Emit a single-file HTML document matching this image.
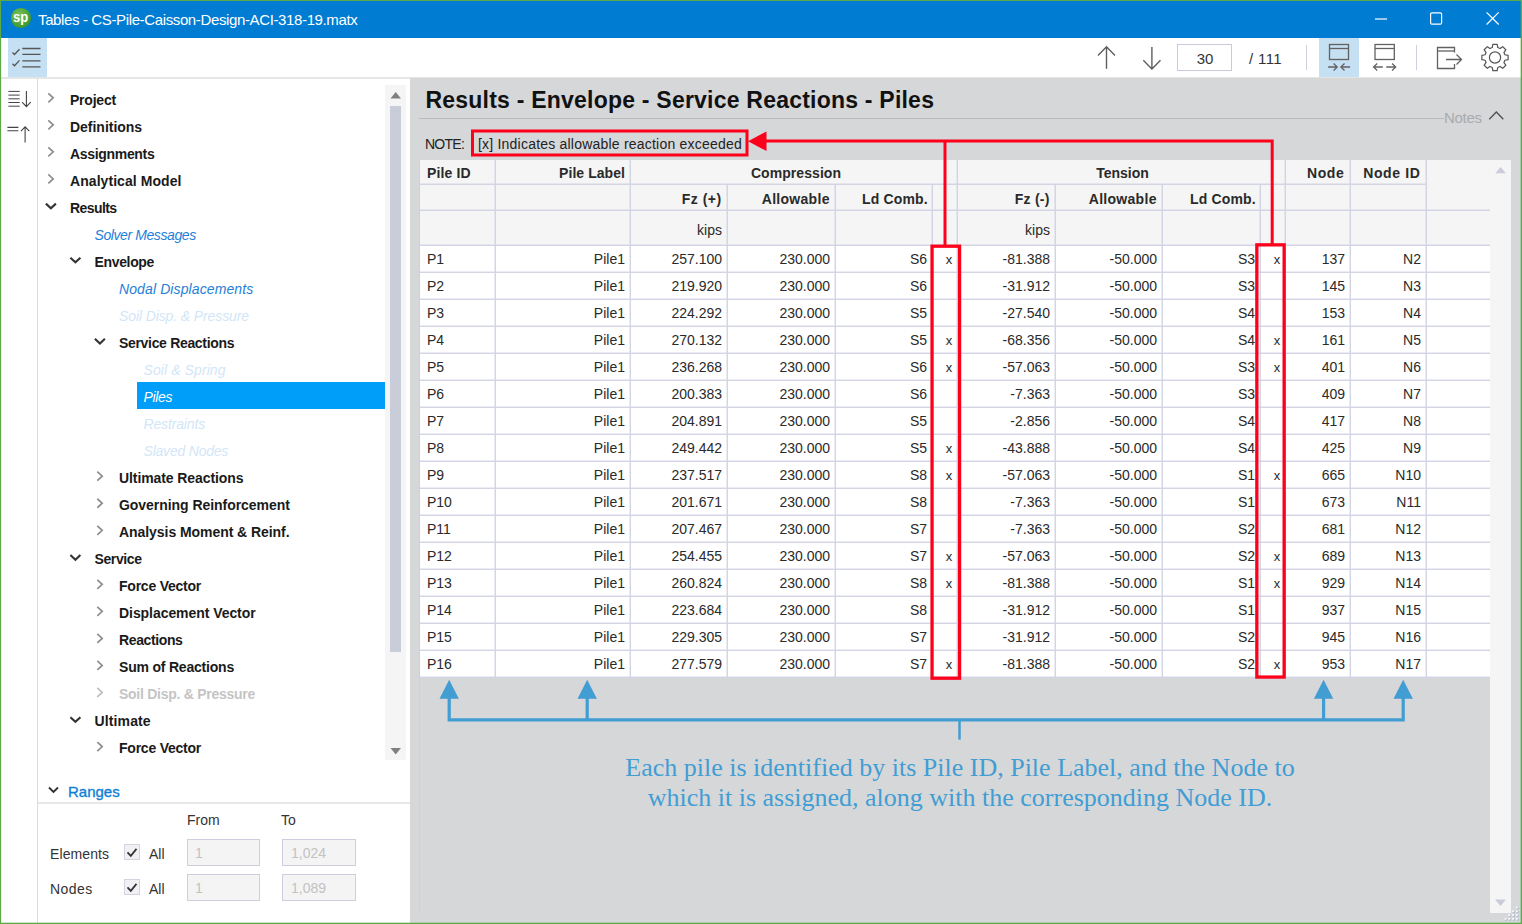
<!DOCTYPE html>
<html><head><meta charset="utf-8"><title>Tables</title>
<style>
*{box-sizing:border-box;margin:0;padding:0}
html,body{width:1522px;height:924px;overflow:hidden;background:#d6d7d9}
body{font-family:"Liberation Sans",sans-serif;font-size:14px;color:#1e1e1e;position:relative}
.abs{position:absolute}
.t{position:absolute;white-space:nowrap;line-height:1}
.b{font-weight:bold}
.i{font-style:italic}
.r{text-align:right}
.c{text-align:center}
.cell{position:absolute;white-space:nowrap;line-height:27px;height:27px;font-size:14px;color:#2a2a2a}
.hl{position:absolute;height:2px;margin-top:-1px;background:linear-gradient(to bottom,rgba(205,208,226,.40) 50%,#d3d5e4 50%)}
.vl{position:absolute;width:2px;margin-left:-1px;background:linear-gradient(to right,rgba(205,208,226,.40) 50%,#d3d5e4 50%)}
svg{position:absolute;overflow:visible}
</style></head><body>

<div class="abs" style="left:0;top:0;width:1522px;height:924px;background:#5caa44"></div>
<div class="abs" style="left:1px;top:1px;width:1520px;height:37px;background:#007cd3"></div>
<div class="abs" style="left:1px;top:38px;width:1520px;height:40px;background:#fff"></div>
<div class="abs" style="left:1px;top:78px;width:409px;height:845px;background:#fff"></div>
<div class="abs" style="left:410px;top:78px;width:1111px;height:845px;background:#d6d7d9"></div>
<div class="abs" style="left:11px;top:8.400px;width:19.600px;height:19.600px;border-radius:50%;background:radial-gradient(circle at 40% 35%,#79c25a,#3f9a2c 70%,#2f8a22)"></div>
<div class="t b" style="left:13.200px;top:9.200px;font-size:15px;color:#fff;transform:scaleX(.87);transform-origin:0 0">sp</div>
<div class="t" style="left:38px;top:11.800px;font-size:15px;letter-spacing:-0.37px;color:#fff">Tables - CS-Pile-Caisson-Design-ACI-318-19.matx</div>
<svg style="left:0;top:0" width="1522" height="40"><g stroke="#fff" stroke-width="1.2" fill="none"><path d="M1375 19H1387"/><rect x="1430.600" y="12.800" width="11" height="11.400" rx="1.200"/><path d="M1486.600 12.300L1498.700 24.500M1498.700 12.300L1486.600 24.500"/></g></svg>
<div class="abs" style="left:8px;top:38px;width:39px;height:39px;background:#c5dff3"></div>
<svg style="left:0;top:0" width="60" height="80"><g stroke="#555" stroke-width="1.3" fill="none"><path d="M12.500 52.500L14.5 54.5L19.500 49.200"/><path d="M12.500 63.700L14.5 65.700L19.500 60.400"/><path d="M22.300 48.500H40.500M22.300 54.300H40.500M22.300 60.900H40.500M22.300 66.800H40.500"/></g></svg>
<div class="abs" style="left:1px;top:77px;width:1520px;height:1px;background:#e3e5e5"></div><div class="abs" style="left:1px;top:78px;width:409px;height:1px;background:#e6e7e8"></div>
<div class="abs" style="left:37px;top:78px;width:1px;height:845px;background:#dcdcdc"></div>
<svg style="left:0;top:0" width="40" height="160"><g stroke="#444" stroke-width="1.1" fill="none"><path d="M8.400 91.400H19.700M8.400 95.100H19.700M8.400 98.800H19.700M8.400 102.500H19.700M8.400 106.200H19.700" stroke-width="1"/><path d="M26.400 91V106.300M22.100 102.200L26.400 106.600L30.700 102.200"/><path d="M7.400 127.400H18.400M7.400 130.700H18.400"/><path d="M25.100 142.500V127.200M21 131.200L25.100 126.900L29.300 131.200"/></g></svg>
<svg style="left:0;top:0" width="1522" height="80"><g stroke="#5e5e5e" stroke-width="1.400" fill="none"><path d="M1106.500 68.800V46.800M1098 55.400L1106.500 46.800L1115 55.400"/><path d="M1151.900 47V68.800M1143.300 60.300L1151.900 68.900L1160.500 60.300"/></g></svg>
<div class="abs" style="left:1177px;top:44px;width:55px;height:27px;border:1px solid #c9cade;background:#fff"></div>
<div class="t c" style="left:1177px;top:50.500px;width:56px;font-size:15px;color:#333">30</div>
<div class="t" style="left:1249px;top:50.500px;font-size:15px;letter-spacing:0.36px;color:#333">/ 111</div>
<div class="abs" style="left:1306px;top:45px;width:1px;height:25px;background:#cfd0dc"></div>
<div class="abs" style="left:1319px;top:38px;width:40px;height:39px;background:#c5dff3"></div>
<div class="abs" style="left:1416px;top:45px;width:1px;height:25px;background:#cfd0dc"></div>
<svg style="left:0;top:0" width="1522" height="80"><g stroke="#626262" stroke-width="1.3" fill="none"><rect x="1329.5" y="44.500" width="19" height="15"/><path d="M1329.500 48.500H1348.500"/><path d="M1328.100 67H1337.200M1333.600 63.500L1337.200 67L1333.600 70.500M1350.100 67H1340.900M1344.500 63.500L1340.900 67L1344.500 70.500"/><rect x="1375" y="44.500" width="19.300" height="15"/><path d="M1375 48.500H1394.300"/><path d="M1373.600 67H1382.800M1377.200 63.500L1373.600 67L1377.200 70.500M1395.700 67H1386.300M1392.100 63.500L1395.700 67L1392.100 70.500"/><path d="M1454.500 52.500V47.500H1437.500V68.500H1454.500V64"/><path d="M1437.500 51H1454.500"/><path d="M1446 59.500H1461.500M1456.500 54.500L1461.500 59.500L1456.500 64.500"/></g><g transform="translate(1495,57.500)" stroke="#555" stroke-width="1.2" fill="none" stroke-linejoin="round"><circle r="5.600"/><path d="M-2.75 -9.93 L-2.20 -13.12 L2.20 -13.12 L2.75 -9.93 L5.07 -8.96 L7.72 -10.83 L10.83 -7.72 L8.96 -5.07 L9.93 -2.75 L13.12 -2.20 L13.12 2.20 L9.93 2.75 L8.96 5.07 L10.83 7.72 L7.72 10.83 L5.07 8.96 L2.75 9.93 L2.20 13.12 L-2.20 13.12 L-2.75 9.93 L-5.07 8.96 L-7.72 10.83 L-10.83 7.72 L-8.96 5.07 L-9.93 2.75 L-13.12 2.20 L-13.12 -2.20 L-9.93 -2.75 L-8.96 -5.07 L-10.83 -7.72 L-7.72 -10.83 L-5.07 -8.96Z"/></g></svg>
<svg style="left:0;top:0" width="400" height="800"><path d="M48.3 93.3L53.2 97.8L48.3 102.3" stroke="#8e8e8e" stroke-width="1.700" fill="none"/></svg>
<div class="t b" style="left:70px;top:92.55px;font-size:14px;letter-spacing:-0.22px;color:#1a1a1a">Project</div>
<svg style="left:0;top:0" width="400" height="800"><path d="M48.3 120.33L53.2 124.83L48.3 129.33" stroke="#8e8e8e" stroke-width="1.700" fill="none"/></svg>
<div class="t b" style="left:70px;top:119.58px;font-size:14px;letter-spacing:-0.02px;color:#1a1a1a">Definitions</div>
<svg style="left:0;top:0" width="400" height="800"><path d="M48.3 147.36L53.2 151.86L48.3 156.36" stroke="#8e8e8e" stroke-width="1.700" fill="none"/></svg>
<div class="t b" style="left:70px;top:146.61px;font-size:14px;letter-spacing:-0.32px;color:#1a1a1a">Assignments</div>
<svg style="left:0;top:0" width="400" height="800"><path d="M48.3 174.39L53.2 178.89L48.3 183.39" stroke="#8e8e8e" stroke-width="1.700" fill="none"/></svg>
<div class="t b" style="left:70px;top:173.64px;font-size:14px;letter-spacing:0.06px;color:#1a1a1a">Analytical Model</div>
<svg style="left:0;top:0" width="400" height="800"><path d="M45.9 203.62L50.9 208.32L55.9 203.62" stroke="#333" stroke-width="2.1" fill="none"/></svg>
<div class="t b" style="left:70px;top:200.67px;font-size:14px;letter-spacing:-0.58px;color:#1a1a1a">Results</div>
<div class="t i" style="left:94.5px;top:227.7px;font-size:14px;letter-spacing:-0.41px;color:#1f80d8">Solver Messages</div>
<svg style="left:0;top:0" width="400" height="800"><path d="M70.4 257.68L75.4 262.38L80.4 257.68" stroke="#333" stroke-width="2.1" fill="none"/></svg>
<div class="t b" style="left:94.5px;top:254.73px;font-size:14px;letter-spacing:-0.34px;color:#1a1a1a">Envelope</div>
<div class="t i" style="left:119px;top:281.76px;font-size:14px;letter-spacing:0.11px;color:#1f80d8">Nodal Displacements</div>
<div class="t i" style="left:119px;top:308.79px;font-size:14px;letter-spacing:-0.11px;color:#d2e6f7">Soil Disp. &amp; Pressure</div>
<svg style="left:0;top:0" width="400" height="800"><path d="M94.9 338.77L99.9 343.47L104.9 338.77" stroke="#333" stroke-width="2.1" fill="none"/></svg>
<div class="t b" style="left:119px;top:335.82px;font-size:14px;letter-spacing:-0.32px;color:#1a1a1a">Service Reactions</div>
<div class="t i" style="left:143.5px;top:362.85px;font-size:14px;letter-spacing:0.09px;color:#d2e6f7">Soil &amp; Spring</div>
<div class="abs" style="left:137px;top:382px;width:248px;height:27px;background:#009df9"></div>
<div class="t i" style="left:143.5px;top:389.88px;font-size:14px;letter-spacing:-0.33px;color:#fff">Piles</div>
<div class="t i" style="left:143.5px;top:416.91px;font-size:14px;letter-spacing:-0.15px;color:#d2e6f7">Restraints</div>
<div class="t i" style="left:143.5px;top:443.94px;font-size:14px;letter-spacing:-0.21px;color:#d2e6f7">Slaved Nodes</div>
<svg style="left:0;top:0" width="400" height="800"><path d="M97.3 471.72L102.2 476.22L97.3 480.72" stroke="#8e8e8e" stroke-width="1.700" fill="none"/></svg>
<div class="t b" style="left:119px;top:470.97px;font-size:14px;letter-spacing:-0.09px;color:#1a1a1a">Ultimate Reactions</div>
<svg style="left:0;top:0" width="400" height="800"><path d="M97.3 498.75L102.2 503.25L97.3 507.75" stroke="#8e8e8e" stroke-width="1.700" fill="none"/></svg>
<div class="t b" style="left:119px;top:498px;font-size:14px;letter-spacing:-0.05px;color:#1a1a1a">Governing Reinforcement</div>
<svg style="left:0;top:0" width="400" height="800"><path d="M97.3 525.78L102.2 530.28L97.3 534.78" stroke="#8e8e8e" stroke-width="1.700" fill="none"/></svg>
<div class="t b" style="left:119px;top:525.03px;font-size:14px;letter-spacing:-0.06px;color:#1a1a1a">Analysis Moment &amp; Reinf.</div>
<svg style="left:0;top:0" width="400" height="800"><path d="M70.4 555.01L75.4 559.71L80.4 555.01" stroke="#333" stroke-width="2.1" fill="none"/></svg>
<div class="t b" style="left:94.5px;top:552.06px;font-size:14px;letter-spacing:-0.39px;color:#1a1a1a">Service</div>
<svg style="left:0;top:0" width="400" height="800"><path d="M97.3 579.84L102.2 584.34L97.3 588.84" stroke="#8e8e8e" stroke-width="1.700" fill="none"/></svg>
<div class="t b" style="left:119px;top:579.09px;font-size:14px;letter-spacing:-0.23px;color:#1a1a1a">Force Vector</div>
<svg style="left:0;top:0" width="400" height="800"><path d="M97.3 606.87L102.2 611.37L97.3 615.87" stroke="#8e8e8e" stroke-width="1.700" fill="none"/></svg>
<div class="t b" style="left:119px;top:606.12px;font-size:14px;letter-spacing:-0.06px;color:#1a1a1a">Displacement Vector</div>
<svg style="left:0;top:0" width="400" height="800"><path d="M97.3 633.9L102.2 638.4L97.3 642.9" stroke="#8e8e8e" stroke-width="1.700" fill="none"/></svg>
<div class="t b" style="left:119px;top:633.15px;font-size:14px;letter-spacing:-0.38px;color:#1a1a1a">Reactions</div>
<svg style="left:0;top:0" width="400" height="800"><path d="M97.3 660.93L102.2 665.43L97.3 669.93" stroke="#8e8e8e" stroke-width="1.700" fill="none"/></svg>
<div class="t b" style="left:119px;top:660.18px;font-size:14px;letter-spacing:-0.2px;color:#1a1a1a">Sum of Reactions</div>
<svg style="left:0;top:0" width="400" height="800"><path d="M97.3 687.96L102.2 692.46L97.3 696.96" stroke="#bdbdbd" stroke-width="1.700" fill="none"/></svg>
<div class="t b" style="left:119px;top:687.21px;font-size:14px;letter-spacing:-0.27px;color:#c4c4c4">Soil Disp. &amp; Pressure</div>
<svg style="left:0;top:0" width="400" height="800"><path d="M70.4 717.19L75.4 721.89L80.4 717.19" stroke="#333" stroke-width="2.1" fill="none"/></svg>
<div class="t b" style="left:94.5px;top:714.24px;font-size:14px;letter-spacing:0.13px;color:#1a1a1a">Ultimate</div>
<svg style="left:0;top:0" width="400" height="800"><path d="M97.3 742.02L102.2 746.52L97.3 751.02" stroke="#8e8e8e" stroke-width="1.700" fill="none"/></svg>
<div class="t b" style="left:119px;top:741.27px;font-size:14px;letter-spacing:-0.23px;color:#1a1a1a">Force Vector</div>
<div class="abs" style="left:385px;top:85px;width:21px;height:675px;background:#f5f5f5"></div>
<div class="abs" style="left:390px;top:106px;width:11px;height:546px;background:#c9cdd9"></div>
<svg style="left:0;top:0" width="420" height="800"><path d="M390.500 98.500L395.700 92L401 98.500Z" fill="#808080"/><path d="M390.500 748L401 748L395.700 754.500Z" fill="#808080"/></svg>
<svg style="left:0;top:0" width="100" height="820"><path d="M49 787.500L53.500 792L58 787.500" stroke="#333" stroke-width="1.9" fill="none"/></svg>
<div class="t" style="left:68px;top:783.500px;font-size:15px;color:#0f7fd6;-webkit-text-stroke:0.35px #0f7fd6">Ranges</div>
<div class="abs" style="left:38px;top:802px;width:372px;height:2px;background:#e7e7e7"></div>
<div class="t" style="left:187px;top:813px;font-size:14px;color:#333">From</div>
<div class="t" style="left:281px;top:813px;font-size:14px;color:#333">To</div>
<div class="t" style="left:50px;top:846.6px;font-size:14px;letter-spacing:0.09px;color:#333">Elements</div>
<div class="abs" style="left:124px;top:844px;width:16px;height:16px;background:#f0f0f5;border:1px solid #d4d4e0"></div>
<svg style="left:0;top:0" width="200" height="924"><path d="M127.500 852.4L130.800 855.9L136.500 848.9" stroke="#333" stroke-width="1.7" fill="none"/></svg>
<div class="t" style="left:149px;top:846.6px;font-size:14px;color:#333">All</div>
<div class="abs" style="left:187px;top:839px;width:73px;height:27px;background:#f4f4f4;border:1px solid #cdcee0"></div>
<div class="t" style="left:195px;top:846px;font-size:14px;color:#c2c2c2">1</div>
<div class="abs" style="left:282px;top:839px;width:74px;height:27px;background:#f4f4f4;border:1px solid #cdcee0"></div>
<div class="t" style="left:291px;top:846px;font-size:14px;color:#c2c2c2">1,024</div>
<div class="t" style="left:50px;top:881.6px;font-size:14px;letter-spacing:0.44px;color:#333">Nodes</div>
<div class="abs" style="left:124px;top:879px;width:16px;height:16px;background:#f0f0f5;border:1px solid #d4d4e0"></div>
<svg style="left:0;top:0" width="200" height="924"><path d="M127.500 887.4L130.800 890.9L136.500 883.9" stroke="#333" stroke-width="1.7" fill="none"/></svg>
<div class="t" style="left:149px;top:881.6px;font-size:14px;color:#333">All</div>
<div class="abs" style="left:187px;top:874px;width:73px;height:27px;background:#f4f4f4;border:1px solid #cdcee0"></div>
<div class="t" style="left:195px;top:881px;font-size:14px;color:#c2c2c2">1</div>
<div class="abs" style="left:282px;top:874px;width:74px;height:27px;background:#f4f4f4;border:1px solid #cdcee0"></div>
<div class="t" style="left:291px;top:881px;font-size:14px;color:#c2c2c2">1,089</div>
<div class="t b" style="left:425.500px;top:88.600px;font-size:23px;color:#111;letter-spacing:0.22px">Results - Envelope - Service Reactions - Piles</div>
<div class="abs" style="left:419px;top:118px;width:1025px;height:1px;background:#b9babd"></div>
<div class="t" style="left:1444px;top:109.500px;font-size:15px;letter-spacing:-0.3px;color:#a9aaac">Notes</div>
<svg style="left:0;top:0" width="1522" height="130"><path d="M1489.300 119.200L1496.300 112L1503.300 119.200" stroke="#505050" stroke-width="1.3" fill="none"/></svg>
<div class="t" style="left:425px;top:136.500px;font-size:14px;letter-spacing:-0.74px;color:#222">NOTE:</div>
<div class="t" style="left:478px;top:136.500px;font-size:14px;letter-spacing:0.21px;color:#222">[x] Indicates allowable reaction exceeded</div>
<div class="abs" style="left:419px;top:160px;width:1px;height:753px;background:#cfd0dc"></div>
<div class="abs" style="left:420px;top:160px;width:1091px;height:85px;background:#f5f5f5"></div>
<div class="abs" style="left:1490px;top:245px;width:21px;height:668px;background:#f5f5f5"></div>
<div class="abs" style="left:420px;top:245px;width:1070px;height:432px;background:#fff"></div>
<svg style="left:0;top:0" width="1522" height="924"><path d="M1495.300 173.200L1500.600 167L1505.900 173.200Z" fill="#cacbdc"/><path d="M1495 899.500L1506 899.500L1500.500 906Z" fill="#c9cadb"/></svg>
<div class="hl" style="left:420px;top:184px;width:537px"></div>
<div class="hl" style="left:957px;top:184px;width:469px"></div>
<div class="hl" style="left:420px;top:210px;width:1070px"></div>
<div class="hl" style="left:420px;top:245px;width:1070px"></div>
<div class="hl" style="left:420px;top:272px;width:1070px"></div>
<div class="hl" style="left:420px;top:299px;width:1070px"></div>
<div class="hl" style="left:420px;top:326px;width:1070px"></div>
<div class="hl" style="left:420px;top:353px;width:1070px"></div>
<div class="hl" style="left:420px;top:380px;width:1070px"></div>
<div class="hl" style="left:420px;top:407px;width:1070px"></div>
<div class="hl" style="left:420px;top:434px;width:1070px"></div>
<div class="hl" style="left:420px;top:461px;width:1070px"></div>
<div class="hl" style="left:420px;top:488px;width:1070px"></div>
<div class="hl" style="left:420px;top:515px;width:1070px"></div>
<div class="hl" style="left:420px;top:542px;width:1070px"></div>
<div class="hl" style="left:420px;top:569px;width:1070px"></div>
<div class="hl" style="left:420px;top:596px;width:1070px"></div>
<div class="hl" style="left:420px;top:623px;width:1070px"></div>
<div class="hl" style="left:420px;top:650px;width:1070px"></div>
<div class="hl" style="left:420px;top:677px;width:1070px"></div>
<div class="vl" style="left:495px;top:160px;height:517px"></div>
<div class="vl" style="left:630px;top:160px;height:517px"></div>
<div class="vl" style="left:957px;top:160px;height:517px"></div>
<div class="vl" style="left:1285px;top:160px;height:517px"></div>
<div class="vl" style="left:1350px;top:160px;height:517px"></div>
<div class="vl" style="left:1426px;top:160px;height:517px"></div>
<div class="vl" style="left:727px;top:185px;height:492px"></div>
<div class="vl" style="left:835px;top:185px;height:492px"></div>
<div class="vl" style="left:932px;top:185px;height:492px"></div>
<div class="vl" style="left:1055px;top:185px;height:492px"></div>
<div class="vl" style="left:1162px;top:185px;height:492px"></div>
<div class="vl" style="left:1260px;top:185px;height:492px"></div>
<div class="cell b" style="left:419px;top:160px;width:76px;padding-left:8px;letter-spacing:0.14px;">Pile ID</div>
<div class="cell b" style="left:495px;top:160px;width:135px;text-align:right;padding-right:5.05px;letter-spacing:0.05px;">Pile Label</div>
<div class="cell b" style="left:635px;top:160px;width:322px;text-align:center;letter-spacing:0.06px;">Compression</div>
<div class="cell b" style="left:960px;top:160px;width:325px;text-align:center;">Tension</div>
<div class="cell b" style="left:1285px;top:160px;width:65px;text-align:right;padding-right:5.6px;letter-spacing:0.6px;">Node</div>
<div class="cell b" style="left:1350px;top:160px;width:76px;text-align:right;padding-right:5.62px;letter-spacing:0.62px;">Node ID</div>
<div class="cell b" style="left:630px;top:186px;width:97px;text-align:right;padding-right:5.46px;letter-spacing:0.46px;">Fz (+)</div>
<div class="cell b" style="left:727px;top:186px;width:108px;text-align:right;padding-right:5.29px;letter-spacing:0.29px;">Allowable</div>
<div class="cell b" style="left:835px;top:186px;width:98px;text-align:right;padding-right:5.15px;letter-spacing:0.15px;">Ld Comb.</div>
<div class="cell b" style="left:957px;top:186px;width:98px;text-align:right;padding-right:5.27px;letter-spacing:0.27px;">Fz (-)</div>
<div class="cell b" style="left:1055px;top:186px;width:107px;text-align:right;padding-right:5.29px;letter-spacing:0.29px;">Allowable</div>
<div class="cell b" style="left:1162px;top:186px;width:99px;text-align:right;padding-right:5.15px;letter-spacing:0.15px;">Ld Comb.</div>
<div class="cell" style="left:630px;top:217px;width:97px;text-align:right;padding-right:5px;">kips</div>
<div class="cell" style="left:957px;top:217px;width:98px;text-align:right;padding-right:5px;">kips</div>
<div class="cell" style="left:419px;top:246px;width:76px;padding-left:8px;">P1</div>
<div class="cell" style="left:495px;top:246px;width:135px;text-align:right;padding-right:5px;">Pile1</div>
<div class="cell" style="left:630px;top:246px;width:97px;text-align:right;padding-right:5px;">257.100</div>
<div class="cell" style="left:727px;top:246px;width:108px;text-align:right;padding-right:5px;">230.000</div>
<div class="cell" style="left:835px;top:246px;width:97px;text-align:right;padding-right:5px;">S6</div>
<div class="cell" style="left:932px;top:246px;width:25px;text-align:center;padding-left:9px;font-size:13px">x</div>
<div class="cell" style="left:957px;top:246px;width:98px;text-align:right;padding-right:5px;">-81.388</div>
<div class="cell" style="left:1055px;top:246px;width:107px;text-align:right;padding-right:5px;">-50.000</div>
<div class="cell" style="left:1162px;top:246px;width:98px;text-align:right;padding-right:5px;">S3</div>
<div class="cell" style="left:1260px;top:246px;width:25px;text-align:center;padding-left:9px;font-size:13px">x</div>
<div class="cell" style="left:1285px;top:246px;width:65px;text-align:right;padding-right:5px;">137</div>
<div class="cell" style="left:1350px;top:246px;width:76px;text-align:right;padding-right:5px;">N2</div>
<div class="cell" style="left:419px;top:273px;width:76px;padding-left:8px;">P2</div>
<div class="cell" style="left:495px;top:273px;width:135px;text-align:right;padding-right:5px;">Pile1</div>
<div class="cell" style="left:630px;top:273px;width:97px;text-align:right;padding-right:5px;">219.920</div>
<div class="cell" style="left:727px;top:273px;width:108px;text-align:right;padding-right:5px;">230.000</div>
<div class="cell" style="left:835px;top:273px;width:97px;text-align:right;padding-right:5px;">S6</div>
<div class="cell" style="left:957px;top:273px;width:98px;text-align:right;padding-right:5px;">-31.912</div>
<div class="cell" style="left:1055px;top:273px;width:107px;text-align:right;padding-right:5px;">-50.000</div>
<div class="cell" style="left:1162px;top:273px;width:98px;text-align:right;padding-right:5px;">S3</div>
<div class="cell" style="left:1285px;top:273px;width:65px;text-align:right;padding-right:5px;">145</div>
<div class="cell" style="left:1350px;top:273px;width:76px;text-align:right;padding-right:5px;">N3</div>
<div class="cell" style="left:419px;top:300px;width:76px;padding-left:8px;">P3</div>
<div class="cell" style="left:495px;top:300px;width:135px;text-align:right;padding-right:5px;">Pile1</div>
<div class="cell" style="left:630px;top:300px;width:97px;text-align:right;padding-right:5px;">224.292</div>
<div class="cell" style="left:727px;top:300px;width:108px;text-align:right;padding-right:5px;">230.000</div>
<div class="cell" style="left:835px;top:300px;width:97px;text-align:right;padding-right:5px;">S5</div>
<div class="cell" style="left:957px;top:300px;width:98px;text-align:right;padding-right:5px;">-27.540</div>
<div class="cell" style="left:1055px;top:300px;width:107px;text-align:right;padding-right:5px;">-50.000</div>
<div class="cell" style="left:1162px;top:300px;width:98px;text-align:right;padding-right:5px;">S4</div>
<div class="cell" style="left:1285px;top:300px;width:65px;text-align:right;padding-right:5px;">153</div>
<div class="cell" style="left:1350px;top:300px;width:76px;text-align:right;padding-right:5px;">N4</div>
<div class="cell" style="left:419px;top:327px;width:76px;padding-left:8px;">P4</div>
<div class="cell" style="left:495px;top:327px;width:135px;text-align:right;padding-right:5px;">Pile1</div>
<div class="cell" style="left:630px;top:327px;width:97px;text-align:right;padding-right:5px;">270.132</div>
<div class="cell" style="left:727px;top:327px;width:108px;text-align:right;padding-right:5px;">230.000</div>
<div class="cell" style="left:835px;top:327px;width:97px;text-align:right;padding-right:5px;">S5</div>
<div class="cell" style="left:932px;top:327px;width:25px;text-align:center;padding-left:9px;font-size:13px">x</div>
<div class="cell" style="left:957px;top:327px;width:98px;text-align:right;padding-right:5px;">-68.356</div>
<div class="cell" style="left:1055px;top:327px;width:107px;text-align:right;padding-right:5px;">-50.000</div>
<div class="cell" style="left:1162px;top:327px;width:98px;text-align:right;padding-right:5px;">S4</div>
<div class="cell" style="left:1260px;top:327px;width:25px;text-align:center;padding-left:9px;font-size:13px">x</div>
<div class="cell" style="left:1285px;top:327px;width:65px;text-align:right;padding-right:5px;">161</div>
<div class="cell" style="left:1350px;top:327px;width:76px;text-align:right;padding-right:5px;">N5</div>
<div class="cell" style="left:419px;top:354px;width:76px;padding-left:8px;">P5</div>
<div class="cell" style="left:495px;top:354px;width:135px;text-align:right;padding-right:5px;">Pile1</div>
<div class="cell" style="left:630px;top:354px;width:97px;text-align:right;padding-right:5px;">236.268</div>
<div class="cell" style="left:727px;top:354px;width:108px;text-align:right;padding-right:5px;">230.000</div>
<div class="cell" style="left:835px;top:354px;width:97px;text-align:right;padding-right:5px;">S6</div>
<div class="cell" style="left:932px;top:354px;width:25px;text-align:center;padding-left:9px;font-size:13px">x</div>
<div class="cell" style="left:957px;top:354px;width:98px;text-align:right;padding-right:5px;">-57.063</div>
<div class="cell" style="left:1055px;top:354px;width:107px;text-align:right;padding-right:5px;">-50.000</div>
<div class="cell" style="left:1162px;top:354px;width:98px;text-align:right;padding-right:5px;">S3</div>
<div class="cell" style="left:1260px;top:354px;width:25px;text-align:center;padding-left:9px;font-size:13px">x</div>
<div class="cell" style="left:1285px;top:354px;width:65px;text-align:right;padding-right:5px;">401</div>
<div class="cell" style="left:1350px;top:354px;width:76px;text-align:right;padding-right:5px;">N6</div>
<div class="cell" style="left:419px;top:381px;width:76px;padding-left:8px;">P6</div>
<div class="cell" style="left:495px;top:381px;width:135px;text-align:right;padding-right:5px;">Pile1</div>
<div class="cell" style="left:630px;top:381px;width:97px;text-align:right;padding-right:5px;">200.383</div>
<div class="cell" style="left:727px;top:381px;width:108px;text-align:right;padding-right:5px;">230.000</div>
<div class="cell" style="left:835px;top:381px;width:97px;text-align:right;padding-right:5px;">S6</div>
<div class="cell" style="left:957px;top:381px;width:98px;text-align:right;padding-right:5px;">-7.363</div>
<div class="cell" style="left:1055px;top:381px;width:107px;text-align:right;padding-right:5px;">-50.000</div>
<div class="cell" style="left:1162px;top:381px;width:98px;text-align:right;padding-right:5px;">S3</div>
<div class="cell" style="left:1285px;top:381px;width:65px;text-align:right;padding-right:5px;">409</div>
<div class="cell" style="left:1350px;top:381px;width:76px;text-align:right;padding-right:5px;">N7</div>
<div class="cell" style="left:419px;top:408px;width:76px;padding-left:8px;">P7</div>
<div class="cell" style="left:495px;top:408px;width:135px;text-align:right;padding-right:5px;">Pile1</div>
<div class="cell" style="left:630px;top:408px;width:97px;text-align:right;padding-right:5px;">204.891</div>
<div class="cell" style="left:727px;top:408px;width:108px;text-align:right;padding-right:5px;">230.000</div>
<div class="cell" style="left:835px;top:408px;width:97px;text-align:right;padding-right:5px;">S5</div>
<div class="cell" style="left:957px;top:408px;width:98px;text-align:right;padding-right:5px;">-2.856</div>
<div class="cell" style="left:1055px;top:408px;width:107px;text-align:right;padding-right:5px;">-50.000</div>
<div class="cell" style="left:1162px;top:408px;width:98px;text-align:right;padding-right:5px;">S4</div>
<div class="cell" style="left:1285px;top:408px;width:65px;text-align:right;padding-right:5px;">417</div>
<div class="cell" style="left:1350px;top:408px;width:76px;text-align:right;padding-right:5px;">N8</div>
<div class="cell" style="left:419px;top:435px;width:76px;padding-left:8px;">P8</div>
<div class="cell" style="left:495px;top:435px;width:135px;text-align:right;padding-right:5px;">Pile1</div>
<div class="cell" style="left:630px;top:435px;width:97px;text-align:right;padding-right:5px;">249.442</div>
<div class="cell" style="left:727px;top:435px;width:108px;text-align:right;padding-right:5px;">230.000</div>
<div class="cell" style="left:835px;top:435px;width:97px;text-align:right;padding-right:5px;">S5</div>
<div class="cell" style="left:932px;top:435px;width:25px;text-align:center;padding-left:9px;font-size:13px">x</div>
<div class="cell" style="left:957px;top:435px;width:98px;text-align:right;padding-right:5px;">-43.888</div>
<div class="cell" style="left:1055px;top:435px;width:107px;text-align:right;padding-right:5px;">-50.000</div>
<div class="cell" style="left:1162px;top:435px;width:98px;text-align:right;padding-right:5px;">S4</div>
<div class="cell" style="left:1285px;top:435px;width:65px;text-align:right;padding-right:5px;">425</div>
<div class="cell" style="left:1350px;top:435px;width:76px;text-align:right;padding-right:5px;">N9</div>
<div class="cell" style="left:419px;top:462px;width:76px;padding-left:8px;">P9</div>
<div class="cell" style="left:495px;top:462px;width:135px;text-align:right;padding-right:5px;">Pile1</div>
<div class="cell" style="left:630px;top:462px;width:97px;text-align:right;padding-right:5px;">237.517</div>
<div class="cell" style="left:727px;top:462px;width:108px;text-align:right;padding-right:5px;">230.000</div>
<div class="cell" style="left:835px;top:462px;width:97px;text-align:right;padding-right:5px;">S8</div>
<div class="cell" style="left:932px;top:462px;width:25px;text-align:center;padding-left:9px;font-size:13px">x</div>
<div class="cell" style="left:957px;top:462px;width:98px;text-align:right;padding-right:5px;">-57.063</div>
<div class="cell" style="left:1055px;top:462px;width:107px;text-align:right;padding-right:5px;">-50.000</div>
<div class="cell" style="left:1162px;top:462px;width:98px;text-align:right;padding-right:5px;">S1</div>
<div class="cell" style="left:1260px;top:462px;width:25px;text-align:center;padding-left:9px;font-size:13px">x</div>
<div class="cell" style="left:1285px;top:462px;width:65px;text-align:right;padding-right:5px;">665</div>
<div class="cell" style="left:1350px;top:462px;width:76px;text-align:right;padding-right:5px;">N10</div>
<div class="cell" style="left:419px;top:489px;width:76px;padding-left:8px;">P10</div>
<div class="cell" style="left:495px;top:489px;width:135px;text-align:right;padding-right:5px;">Pile1</div>
<div class="cell" style="left:630px;top:489px;width:97px;text-align:right;padding-right:5px;">201.671</div>
<div class="cell" style="left:727px;top:489px;width:108px;text-align:right;padding-right:5px;">230.000</div>
<div class="cell" style="left:835px;top:489px;width:97px;text-align:right;padding-right:5px;">S8</div>
<div class="cell" style="left:957px;top:489px;width:98px;text-align:right;padding-right:5px;">-7.363</div>
<div class="cell" style="left:1055px;top:489px;width:107px;text-align:right;padding-right:5px;">-50.000</div>
<div class="cell" style="left:1162px;top:489px;width:98px;text-align:right;padding-right:5px;">S1</div>
<div class="cell" style="left:1285px;top:489px;width:65px;text-align:right;padding-right:5px;">673</div>
<div class="cell" style="left:1350px;top:489px;width:76px;text-align:right;padding-right:5px;">N11</div>
<div class="cell" style="left:419px;top:516px;width:76px;padding-left:8px;">P11</div>
<div class="cell" style="left:495px;top:516px;width:135px;text-align:right;padding-right:5px;">Pile1</div>
<div class="cell" style="left:630px;top:516px;width:97px;text-align:right;padding-right:5px;">207.467</div>
<div class="cell" style="left:727px;top:516px;width:108px;text-align:right;padding-right:5px;">230.000</div>
<div class="cell" style="left:835px;top:516px;width:97px;text-align:right;padding-right:5px;">S7</div>
<div class="cell" style="left:957px;top:516px;width:98px;text-align:right;padding-right:5px;">-7.363</div>
<div class="cell" style="left:1055px;top:516px;width:107px;text-align:right;padding-right:5px;">-50.000</div>
<div class="cell" style="left:1162px;top:516px;width:98px;text-align:right;padding-right:5px;">S2</div>
<div class="cell" style="left:1285px;top:516px;width:65px;text-align:right;padding-right:5px;">681</div>
<div class="cell" style="left:1350px;top:516px;width:76px;text-align:right;padding-right:5px;">N12</div>
<div class="cell" style="left:419px;top:543px;width:76px;padding-left:8px;">P12</div>
<div class="cell" style="left:495px;top:543px;width:135px;text-align:right;padding-right:5px;">Pile1</div>
<div class="cell" style="left:630px;top:543px;width:97px;text-align:right;padding-right:5px;">254.455</div>
<div class="cell" style="left:727px;top:543px;width:108px;text-align:right;padding-right:5px;">230.000</div>
<div class="cell" style="left:835px;top:543px;width:97px;text-align:right;padding-right:5px;">S7</div>
<div class="cell" style="left:932px;top:543px;width:25px;text-align:center;padding-left:9px;font-size:13px">x</div>
<div class="cell" style="left:957px;top:543px;width:98px;text-align:right;padding-right:5px;">-57.063</div>
<div class="cell" style="left:1055px;top:543px;width:107px;text-align:right;padding-right:5px;">-50.000</div>
<div class="cell" style="left:1162px;top:543px;width:98px;text-align:right;padding-right:5px;">S2</div>
<div class="cell" style="left:1260px;top:543px;width:25px;text-align:center;padding-left:9px;font-size:13px">x</div>
<div class="cell" style="left:1285px;top:543px;width:65px;text-align:right;padding-right:5px;">689</div>
<div class="cell" style="left:1350px;top:543px;width:76px;text-align:right;padding-right:5px;">N13</div>
<div class="cell" style="left:419px;top:570px;width:76px;padding-left:8px;">P13</div>
<div class="cell" style="left:495px;top:570px;width:135px;text-align:right;padding-right:5px;">Pile1</div>
<div class="cell" style="left:630px;top:570px;width:97px;text-align:right;padding-right:5px;">260.824</div>
<div class="cell" style="left:727px;top:570px;width:108px;text-align:right;padding-right:5px;">230.000</div>
<div class="cell" style="left:835px;top:570px;width:97px;text-align:right;padding-right:5px;">S8</div>
<div class="cell" style="left:932px;top:570px;width:25px;text-align:center;padding-left:9px;font-size:13px">x</div>
<div class="cell" style="left:957px;top:570px;width:98px;text-align:right;padding-right:5px;">-81.388</div>
<div class="cell" style="left:1055px;top:570px;width:107px;text-align:right;padding-right:5px;">-50.000</div>
<div class="cell" style="left:1162px;top:570px;width:98px;text-align:right;padding-right:5px;">S1</div>
<div class="cell" style="left:1260px;top:570px;width:25px;text-align:center;padding-left:9px;font-size:13px">x</div>
<div class="cell" style="left:1285px;top:570px;width:65px;text-align:right;padding-right:5px;">929</div>
<div class="cell" style="left:1350px;top:570px;width:76px;text-align:right;padding-right:5px;">N14</div>
<div class="cell" style="left:419px;top:597px;width:76px;padding-left:8px;">P14</div>
<div class="cell" style="left:495px;top:597px;width:135px;text-align:right;padding-right:5px;">Pile1</div>
<div class="cell" style="left:630px;top:597px;width:97px;text-align:right;padding-right:5px;">223.684</div>
<div class="cell" style="left:727px;top:597px;width:108px;text-align:right;padding-right:5px;">230.000</div>
<div class="cell" style="left:835px;top:597px;width:97px;text-align:right;padding-right:5px;">S8</div>
<div class="cell" style="left:957px;top:597px;width:98px;text-align:right;padding-right:5px;">-31.912</div>
<div class="cell" style="left:1055px;top:597px;width:107px;text-align:right;padding-right:5px;">-50.000</div>
<div class="cell" style="left:1162px;top:597px;width:98px;text-align:right;padding-right:5px;">S1</div>
<div class="cell" style="left:1285px;top:597px;width:65px;text-align:right;padding-right:5px;">937</div>
<div class="cell" style="left:1350px;top:597px;width:76px;text-align:right;padding-right:5px;">N15</div>
<div class="cell" style="left:419px;top:624px;width:76px;padding-left:8px;">P15</div>
<div class="cell" style="left:495px;top:624px;width:135px;text-align:right;padding-right:5px;">Pile1</div>
<div class="cell" style="left:630px;top:624px;width:97px;text-align:right;padding-right:5px;">229.305</div>
<div class="cell" style="left:727px;top:624px;width:108px;text-align:right;padding-right:5px;">230.000</div>
<div class="cell" style="left:835px;top:624px;width:97px;text-align:right;padding-right:5px;">S7</div>
<div class="cell" style="left:957px;top:624px;width:98px;text-align:right;padding-right:5px;">-31.912</div>
<div class="cell" style="left:1055px;top:624px;width:107px;text-align:right;padding-right:5px;">-50.000</div>
<div class="cell" style="left:1162px;top:624px;width:98px;text-align:right;padding-right:5px;">S2</div>
<div class="cell" style="left:1285px;top:624px;width:65px;text-align:right;padding-right:5px;">945</div>
<div class="cell" style="left:1350px;top:624px;width:76px;text-align:right;padding-right:5px;">N16</div>
<div class="cell" style="left:419px;top:651px;width:76px;padding-left:8px;">P16</div>
<div class="cell" style="left:495px;top:651px;width:135px;text-align:right;padding-right:5px;">Pile1</div>
<div class="cell" style="left:630px;top:651px;width:97px;text-align:right;padding-right:5px;">277.579</div>
<div class="cell" style="left:727px;top:651px;width:108px;text-align:right;padding-right:5px;">230.000</div>
<div class="cell" style="left:835px;top:651px;width:97px;text-align:right;padding-right:5px;">S7</div>
<div class="cell" style="left:932px;top:651px;width:25px;text-align:center;padding-left:9px;font-size:13px">x</div>
<div class="cell" style="left:957px;top:651px;width:98px;text-align:right;padding-right:5px;">-81.388</div>
<div class="cell" style="left:1055px;top:651px;width:107px;text-align:right;padding-right:5px;">-50.000</div>
<div class="cell" style="left:1162px;top:651px;width:98px;text-align:right;padding-right:5px;">S2</div>
<div class="cell" style="left:1260px;top:651px;width:25px;text-align:center;padding-left:9px;font-size:13px">x</div>
<div class="cell" style="left:1285px;top:651px;width:65px;text-align:right;padding-right:5px;">953</div>
<div class="cell" style="left:1350px;top:651px;width:76px;text-align:right;padding-right:5px;">N17</div>
<svg style="left:0;top:0" width="1522" height="924"><g stroke="#fc001c" fill="none" stroke-width="3"><rect x="472.5" y="131" width="274.5" height="24"/><path d="M760 141H1272.200V245"/><path d="M945 141V246"/><rect x="932.050" y="246.200" width="27.500" height="432" stroke-width="3.300"/><rect x="1256.850" y="244.850" width="27.300" height="432.200" stroke-width="3.300"/></g><path d="M748 141.200L766.500 131.400V151Z" fill="#fc001c"/></svg>
<svg style="left:0;top:0" width="1522" height="924"><g stroke="#429dd3" fill="none" stroke-width="3.200"><path d="M449.200 696V719.800H1403.200V696"/><path d="M587.200 696V719.800"/><path d="M1323.600 696V719.800"/><path d="M959.500 719.800V739.600" stroke-width="2.500"/></g><g fill="#429dd3">
<path d="M449.2 679.800L458.9 698.700H439.5Z"/>
<path d="M587.2 679.800L596.9 698.700H577.5Z"/>
<path d="M1323.6 679.800L1333.3 698.700H1313.9Z"/>
<path d="M1403.2 679.800L1412.9 698.700H1393.5Z"/>
</g></svg>
<div class="t c" style="left:560px;top:753px;width:800px;font-family:'Liberation Serif',serif;font-size:26px;color:#429dd3;line-height:30px">Each pile is identified by its Pile ID, Pile Label, and the Node to<br>which it is assigned, along with the corresponding Node ID.</div>
<svg style="left:0;top:0" width="1522" height="924"><rect x="1516.6" y="907.3" width="2" height="2" fill="#aab6cc"/><rect x="1516.0" y="906.7" width="1.700" height="1.700" fill="#fff"/><rect x="1512.9" y="911.1" width="2" height="2" fill="#aab6cc"/><rect x="1512.3" y="910.5" width="1.700" height="1.700" fill="#fff"/><rect x="1516.6" y="911.1" width="2" height="2" fill="#aab6cc"/><rect x="1516.0" y="910.5" width="1.700" height="1.700" fill="#fff"/><rect x="1509.1" y="914.8" width="2" height="2" fill="#aab6cc"/><rect x="1508.5" y="914.2" width="1.700" height="1.700" fill="#fff"/><rect x="1512.9" y="914.8" width="2" height="2" fill="#aab6cc"/><rect x="1512.3" y="914.2" width="1.700" height="1.700" fill="#fff"/><rect x="1516.6" y="914.8" width="2" height="2" fill="#aab6cc"/><rect x="1516.0" y="914.2" width="1.700" height="1.700" fill="#fff"/><rect x="1505.3" y="918.6" width="2" height="2" fill="#aab6cc"/><rect x="1504.7" y="918.0" width="1.700" height="1.700" fill="#fff"/><rect x="1509.1" y="918.6" width="2" height="2" fill="#aab6cc"/><rect x="1508.5" y="918.0" width="1.700" height="1.700" fill="#fff"/><rect x="1512.9" y="918.6" width="2" height="2" fill="#aab6cc"/><rect x="1512.3" y="918.0" width="1.700" height="1.700" fill="#fff"/><rect x="1516.6" y="918.6" width="2" height="2" fill="#aab6cc"/><rect x="1516.0" y="918.0" width="1.700" height="1.700" fill="#fff"/></svg>
<div class="abs" style="left:1520px;top:1px;width:1px;height:922px;background:rgba(92,170,68,0.33)"></div>
<div class="abs" style="left:1px;top:922px;width:1520px;height:1px;background:rgba(92,170,68,0.30)"></div>
<div class="abs" style="left:1px;top:1px;width:1px;height:922px;background:rgba(92,170,68,0.10)"></div>
</body></html>
